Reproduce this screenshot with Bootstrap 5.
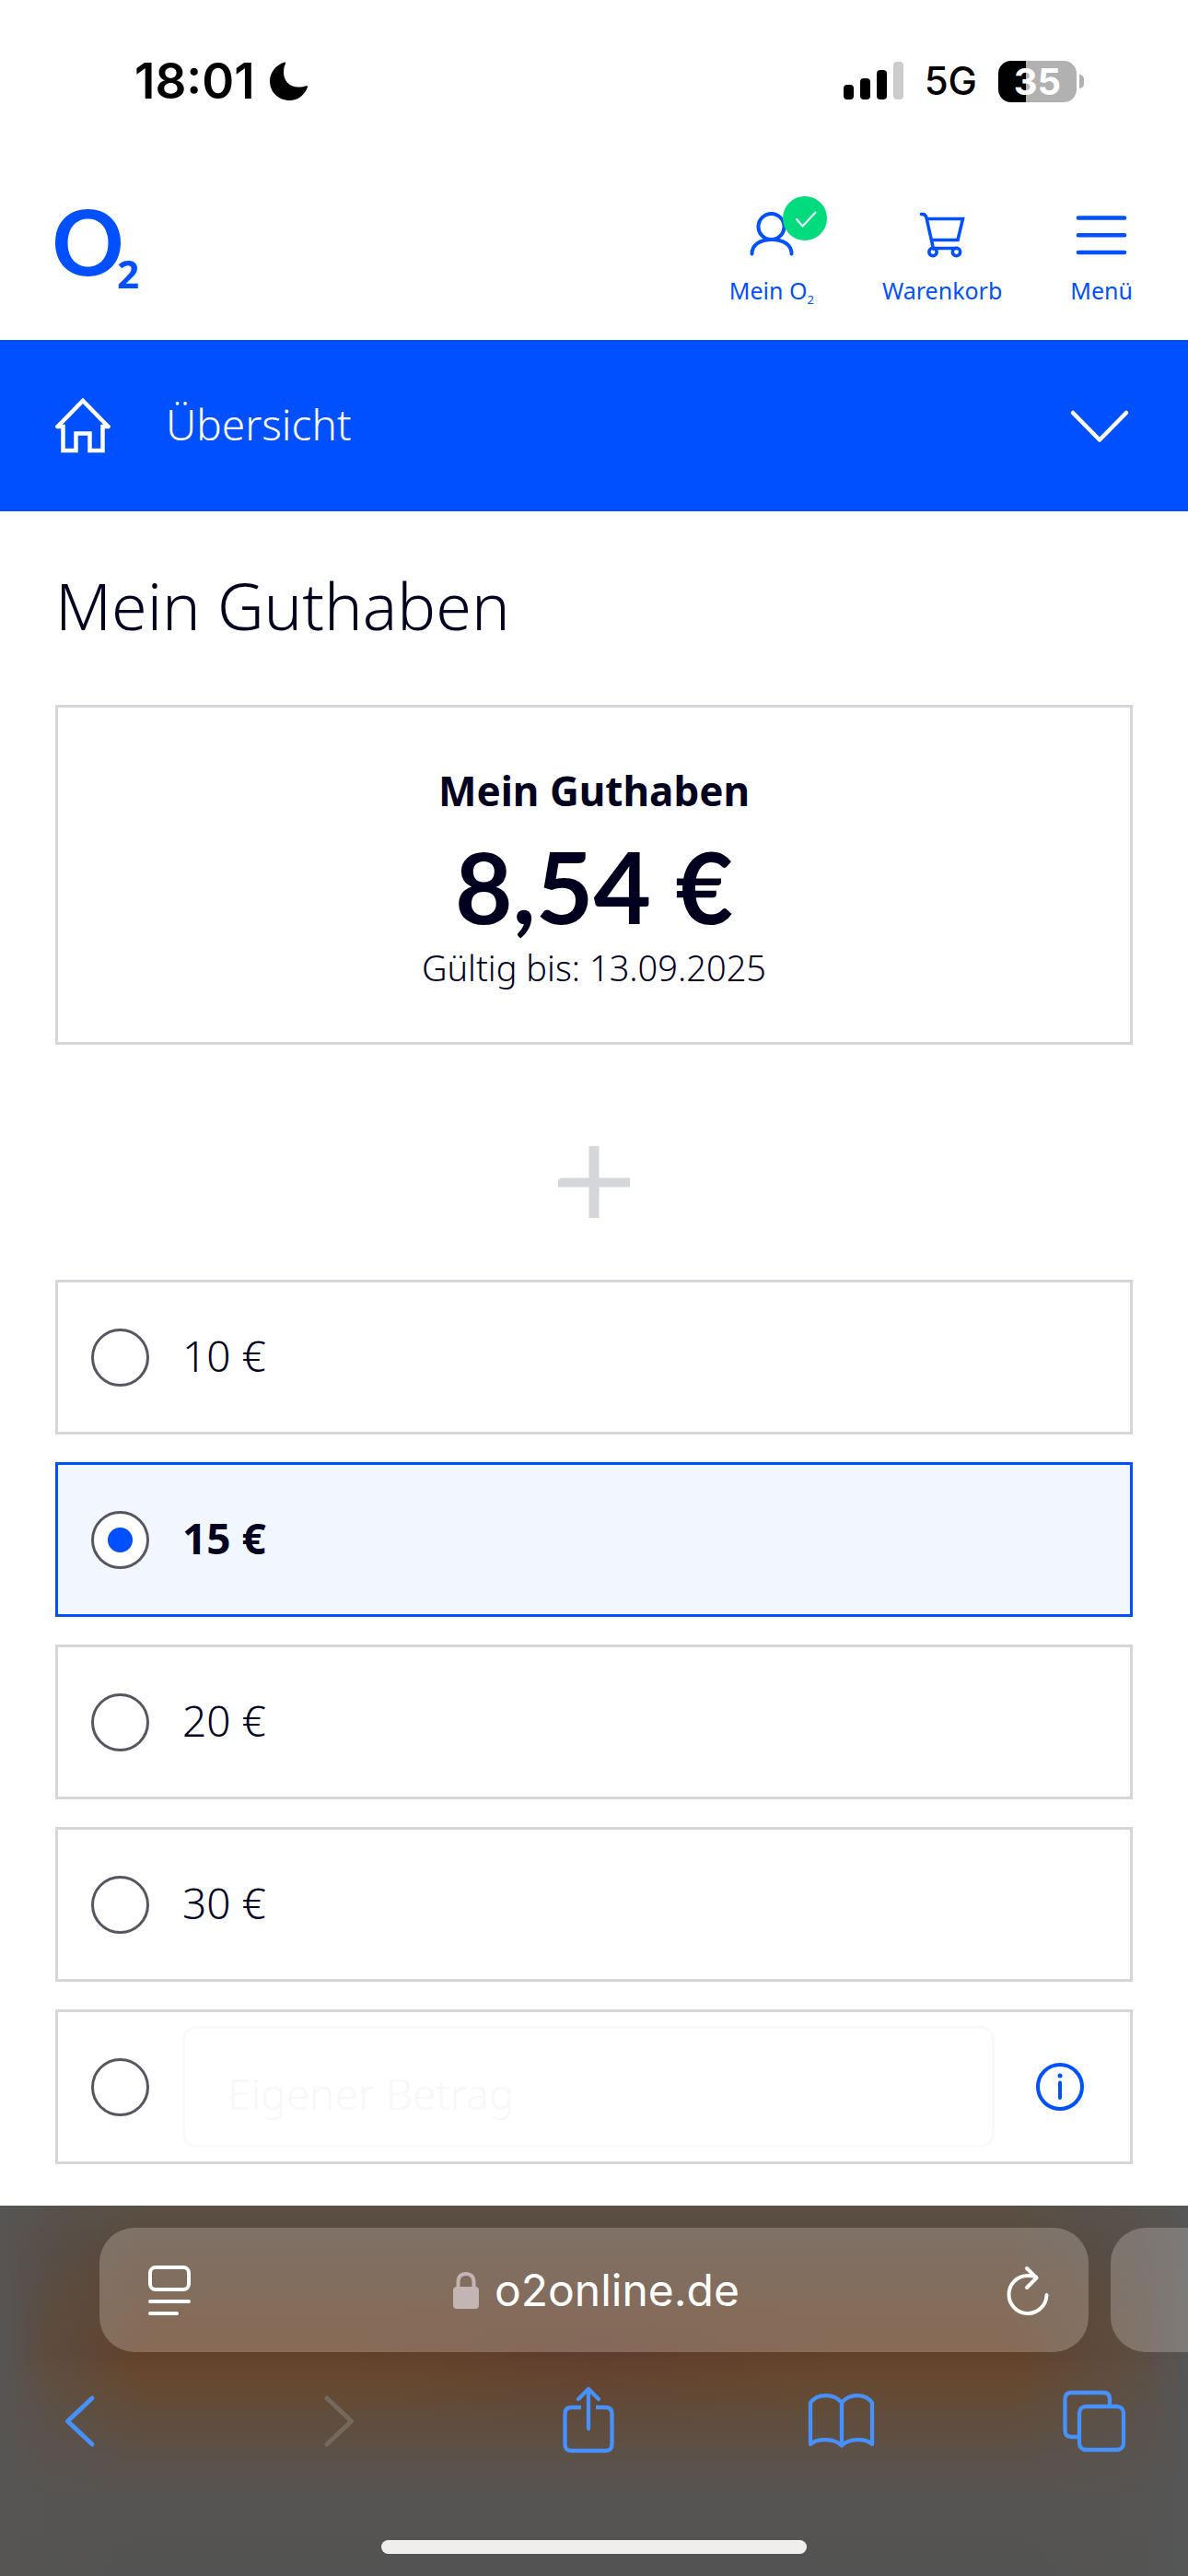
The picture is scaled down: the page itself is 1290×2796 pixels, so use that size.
<!DOCTYPE html>
<html lang="de">
<head>
<meta charset="utf-8">
<meta name="viewport" content="width=device-width, initial-scale=1">
<title>Mein Guthaben – o2online.de</title>
<link href="https://cdn.jsdelivr.net/npm/bootstrap@5.3.0/dist/css/bootstrap.min.css" rel="stylesheet">
<style>
  :root { --o2-blue: #0050ff; --o2-ink: #01001e; --o2-line: #d5d6da; --gutter: 60px; }
  body { font-family: "Noto Sans", "Open Sans", sans-serif; color: var(--o2-ink); background: #fff; }
  svg { display: block; flex: none; overflow: visible; }
  .system-font { font-family: Inter, Roboto, sans-serif; }

  .status-bar { height: 176px; padding: 0 113px 0 146px; color: #000; }
  .status-time { font-size: 53px; line-height: 60px; font-weight: 600; gap: 16px; }
  .status-net { font-size: 42px; line-height: 48px; font-weight: 500; }
  .net-type { padding: 0 23px; }
  .battery-level { width: 85px; height: 45px; border-radius: 14px; font-size: 40px; line-height: 45px; font-weight: 700;
    color: #fff; background: linear-gradient(90deg, #000 35%, #b1b1b1 35%); }
  .battery-tip { width: 5px; height: 15px; border-radius: 0 5px 5px 0; background: #b1b1b1; margin-left: 3px; }

  .site-header { padding: 51px var(--gutter) 36px; }
  .site-nav { gap: 74px; }
  .site-nav a { color: var(--o2-blue); font-size: 25px; line-height: 36px; gap: 14px; }
  .site-nav sub { font-size: 13px; line-height: 0; bottom: -5px; }
  .state-dot { left: 40px; top: -14px; }

  .section-toggle { height: 186px; padding: 0 var(--gutter); background: var(--o2-blue); color: #fff; font-size: 46px; font-weight: 300; gap: 60px; }
  .section-name { padding-bottom: 4px; }

  .content-area { padding: 60px var(--gutter) 45px; }
  .page-title { font-size: 70px; line-height: 84px; font-weight: 300; margin-bottom: 66px; }
  .balance-box { border: 3px solid var(--o2-line); padding: 60px 30px 53px; }
  .balance-label { font-size: 44px; line-height: 60px; font-weight: 700; }
  .balance-value { font-family: Lato, "Noto Sans", sans-serif; font-size: 108px; line-height: 112px; font-weight: 700; margin: 17px 0 5px; }
  .balance-date { font-size: 38px; line-height: 56px; font-weight: 300; }
  .plus-sign { margin: 110px auto 67px; }

  .amount-list { gap: 30px; }
  .amount-option { min-height: 168px; border: 3px solid var(--o2-line); padding: 0 50px 0 36px; gap: 36px; font-size: 46px; line-height: 60px; font-weight: 300; }
  .amount-option label { padding-bottom: 4px; }
  .amount-option:has(> .form-check-input:checked) { border-color: var(--o2-blue); background: #f1f6ff; font-weight: 700; }
  .amount-option .form-check-input { flex: none; width: 63px; height: 63px; margin: 0; border: 3px solid #575562; background: #fff; }
  .amount-option .form-check-input:checked { background: radial-gradient(circle, var(--o2-blue) 13px, #fff 14px); }
  .amount-option .form-control { height: 132px; min-width: 0; border: 3px solid #f9f9fa; border-radius: 15px; padding: 14px 46px 0; font-size: 46px; font-weight: 300; color: var(--o2-ink); }
  .amount-option .form-control::placeholder { color: #f8f8f9; opacity: 1; }
  .info-button { margin-left: 9px; color: var(--o2-blue); }

  .browser-bar { padding: 24px 0; background:
      linear-gradient(90deg, #565554 0, rgba(86,85,84,.5) 4%, rgba(86,85,84,0) 12%, rgba(86,85,84,0) 85%, rgba(86,85,84,.6) 96%, #555657 100%),
      radial-gradient(ellipse 260px 100px at 50% 40%, rgba(90,56,56,.3), rgba(90,56,56,0)),
      linear-gradient(180deg, #5a5045 0, #59473a 12%, #62432b 32%, #62412a 40%, #67482e 46%, #624c38 54%, #5d5046 65%, #565452 78%, #535353 100%);
    color: #4791ff; }
  .tab-row { padding-left: 108px; gap: 24px; }
  .tab-pill { height: 135px; border-radius: 38px; background: rgba(255,246,236,.23); color: #fff; padding: 0 44px 0 53px; }
  .tab-address { font-size: 48px; line-height: 60px; gap: 17px; padding-right: 6px; }
  .tab-next { width: 84px; border-radius: 38px 0 0 38px; padding: 0; flex: none; }
  .tool-row { padding: 37px 67px 94px 51px; }
  .home-indicator { width: 462px; height: 15px; border-radius: 8px; background: #eeeeee; }
</style>
</head>
<body>
<div class="d-flex flex-column min-vh-100">

  <div class="status-bar system-font d-flex justify-content-between align-items-center">
    <div class="status-time d-flex align-items-center">
      <span>18:01</span>
      <svg width="42" height="42" viewBox="0 0 42 42" fill="currentColor" aria-hidden="true"><path d="M16 0.500C17 .3 17.300 1 17 2C15.500 5 15 8 15 11.500C15 21 21.500 27.500 31 27.500C34.500 27.500 37.500 27.200 39.500 26.300C40.800 25.800 41.300 26.600 41 27.500C38 36 30.500 42 21.500 42C9.500 42 0 33 0 21C0 11.500 6.500 3.500 16 .5Z"/></svg>
    </div>
    <div class="status-net d-flex align-items-center">
      <svg width="65" height="42" viewBox="0 0 65 42" aria-hidden="true"><rect y="25" width="11" height="16" rx="4"/><rect x="18" y="18" width="11" height="23" rx="4"/><rect x="36" y="9" width="11" height="32" rx="4"/><rect x="54" width="11" height="41" rx="4" fill="#cbcbcb"/></svg>
      <span class="net-type">5G</span>
      <span class="battery-level text-center">35</span>
      <span class="battery-tip"></span>
    </div>
  </div>

  <header class="site-header d-flex justify-content-between">
    <a href="#" aria-label="o2 Startseite">
      <svg width="92" height="90" viewBox="0 0 92 90" fill="#0050ff"><path fill-rule="evenodd" d="M35.500 0C57 0 71 15 71 36.500S57 73 35.500 73S0 58 0 36.500S14 0 35.500 0ZM35.500 10.500C22 10.500 13.500 21 13.500 36.500S22 62.500 35.500 62.500S57.500 52 57.500 36.500S49 10.500 35.500 10.500Z"/><text x="67" y="86" font-family="Noto Sans, sans-serif" font-size="42" font-weight="700">2</text></svg>
    </a>
    <nav class="site-nav d-flex">
      <a href="#" class="d-flex flex-column align-items-center text-decoration-none">
        <span class="position-relative">
          <svg width="56" height="56" viewBox="0 0 56 56" fill="none" stroke="currentColor" stroke-width="4" stroke-linecap="round"><circle cx="27.500" cy="19" r="14"/><path d="M6.500 48.500C6.500 39 15 33 28 33S49.500 39 49.500 48.500"/></svg>
          <svg class="state-dot position-absolute" width="48" height="48" viewBox="0 0 48 48" fill="none"><circle cx="24" cy="24" r="24" fill="#00dc7d"/><path d="M14.500 24.500L21.500 32.500L36 17" stroke="#fff" stroke-width="2"/></svg>
        </span>
        <span>Mein O<sub>2</sub></span>
      </a>
      <a href="#" class="d-flex flex-column align-items-center text-decoration-none">
        <svg width="56" height="56" viewBox="0 0 56 56" fill="none" stroke="currentColor" stroke-width="3.500"><path d="M5.500 5.500C9 5 10.500 6.500 11 9.500L18.500 43" stroke-linecap="round"/><path d="M11.500 10.500H50.500L45 33.500H17M19 42.500H45"/><circle cx="18" cy="46.500" r="4.200"/><circle cx="43.500" cy="46.500" r="4.200"/></svg>
        <span>Warenkorb</span>
      </a>
      <a href="#" class="d-flex flex-column align-items-center text-decoration-none">
        <svg width="56" height="56" viewBox="0 0 56 56" stroke="currentColor" stroke-width="4.600" stroke-linecap="round"><path d="M3 9.500H53M3 28.300H53M3 47H53"/></svg>
        <span>Menü</span>
      </a>
    </nav>
  </header>

  <button type="button" class="section-toggle btn border-0 rounded-0 d-flex align-items-center w-100 text-start">
    <svg width="60" height="60" viewBox="0 0 60 60" fill="none" stroke="#fff" stroke-width="4.500" stroke-linecap="round" aria-hidden="true"><path d="M2.500 31L30 3L57.500 31"/><path d="M2.500 31H8.500V57H22.500V38.500H37.500V57H51.500V31H57.500"/></svg>
    <span class="section-name flex-grow-1">Übersicht</span>
    <svg width="72" height="36" viewBox="0 0 72 36" fill="none" stroke="#fff" stroke-width="4.500" stroke-linecap="round" stroke-linejoin="round" aria-hidden="true"><path d="M7 4L36 33.500L65 4"/></svg>
  </button>

  <main class="content-area">
    <h1 class="page-title">Mein Guthaben</h1>

    <section class="balance-box text-center">
      <h2 class="balance-label mb-0">Mein Guthaben</h2>
      <p class="balance-value">8,54 €</p>
      <p class="balance-date mb-0">Gültig bis: 13.09.2025</p>
    </section>

    <svg class="plus-sign" width="78" height="78" viewBox="0 0 78 78" fill="#d5d6da" aria-hidden="true"><path d="M33.500 0H44.500V34.500H78V44.500H44.500V78H33.500V44.500H0V39Q0 34.500 5 34.500H33.500Z"/></svg>

    <form class="amount-list d-flex flex-column">
      <div class="amount-option d-flex align-items-center">
        <input class="form-check-input" type="radio" name="amount" id="amount10">
        <label class="flex-grow-1" for="amount10">10 €</label>
      </div>
      <div class="amount-option d-flex align-items-center">
        <input class="form-check-input" type="radio" name="amount" id="amount15" checked>
        <label class="flex-grow-1" for="amount15">15 €</label>
      </div>
      <div class="amount-option d-flex align-items-center">
        <input class="form-check-input" type="radio" name="amount" id="amount20">
        <label class="flex-grow-1" for="amount20">20 €</label>
      </div>
      <div class="amount-option d-flex align-items-center">
        <input class="form-check-input" type="radio" name="amount" id="amount30">
        <label class="flex-grow-1" for="amount30">30 €</label>
      </div>
      <div class="amount-option d-flex align-items-center">
        <input class="form-check-input" type="radio" name="amount" id="amountOwn" aria-label="Eigener Betrag">
        <input class="form-control" type="text" inputmode="decimal" placeholder="Eigener Betrag" aria-label="Eigener Betrag">
        <button type="button" class="info-button btn border-0 p-0" aria-label="Information">
          <svg width="52" height="52" viewBox="0 0 52 52" fill="none" stroke="currentColor" stroke-width="4"><circle cx="26" cy="26" r="24"/><path d="M26 21.500V38" stroke-linecap="round"/><circle cx="26" cy="14" r="2.500" fill="currentColor" stroke="none"/></svg>
        </button>
      </div>
    </form>
  </main>

  <footer class="browser-bar mt-auto">
    <div class="tab-row d-flex">
      <div class="tab-pill system-font flex-grow-1 d-flex align-items-center justify-content-between">
        <button type="button" class="btn border-0 p-0" aria-label="Seiteneinstellungen">
          <svg width="46" height="54" viewBox="0 0 46 54" fill="none" stroke="#fff" stroke-width="4" stroke-linecap="round"><rect x="2" y="2" width="42" height="24" rx="6"/><path d="M2 39H44M2 52H31"/></svg>
        </button>
        <div class="tab-address d-flex align-items-center">
          <svg width="28" height="40" viewBox="0 0 28 40" aria-hidden="true"><rect y="16" width="28" height="24" rx="4" fill="#c2b5b3"/><path d="M5.500 17V11C5.500 5 9 2 14 2S22.500 5 22.500 11V17" fill="none" stroke="#c2b5b3" stroke-width="4"/></svg>
          <span>o2online.de</span>
        </div>
        <button type="button" class="btn border-0 p-0" aria-label="Neu laden">
          <svg width="44" height="54" viewBox="0 0 44 54" fill="none" stroke="#fff" stroke-width="4" stroke-linecap="round" stroke-linejoin="round"><path d="M31 12.500C28 11.300 25.500 11 22 11A20.500 20.500 0 1 0 42.500 32"/><path d="M21 3L31.500 13.500L21 24"/></svg>
        </button>
      </div>
      <div class="tab-pill tab-next"></div>
    </div>
    <div class="tool-row d-flex justify-content-between">
      <button type="button" class="btn border-0 p-0" aria-label="Zurück"><svg width="72" height="73" viewBox="0 0 72 73" fill="none" stroke="#4791ff" stroke-width="5" stroke-linecap="round" stroke-linejoin="round"><path d="M49 13L22.500 38L49 63"/></svg></button>
      <button type="button" class="btn border-0 p-0" aria-label="Vor"><svg width="72" height="73" viewBox="0 0 72 73" fill="none" stroke="#75695f" stroke-width="5" stroke-linecap="round" stroke-linejoin="round"><path d="M29 13L55.500 38L29 63"/></svg></button>
      <button type="button" class="btn border-0 p-0" aria-label="Teilen"><svg width="72" height="73" viewBox="0 0 72 73" fill="none" stroke="#4791ff" stroke-width="4.300" stroke-linecap="round" stroke-linejoin="round"><path d="M38 46V3.500M27 14L38 3L49 14"/><path stroke-linecap="butt" d="M30 23H19.500Q12.500 23 12.500 30V63Q12.500 70 19.500 70H56.500Q63.500 70 63.500 63V30Q63.500 23 56.500 23H46"/></svg></button>
      <button type="button" class="btn border-0 p-0" aria-label="Lesezeichen"><svg width="72" height="73" viewBox="0 0 72 73" fill="none" stroke="#4791ff" stroke-width="4.300" stroke-linecap="round" stroke-linejoin="round"><path d="M38 18C30 7.500 11 7.500 4 18V63C11 56.500 30 56 38 64.500C46 56 64 56.500 71 63V18C64 7.500 46 7.500 38 18ZM38 18V64"/></svg></button>
      <button type="button" class="btn border-0 p-0" aria-label="Tabs"><svg width="72" height="73" viewBox="0 0 72 73" fill="none" stroke="#4791ff" stroke-width="4.300"><rect x="21" y="22" width="48" height="47" rx="7"/><path d="M54 21V14Q54 7 47 7H12.500Q5.500 7 5.500 14V48Q5.500 55 12.500 55H20"/></svg></button>
    </div>
    <div class="home-indicator mx-auto"></div>
  </footer>
</div>
<script src="https://cdn.jsdelivr.net/npm/bootstrap@5.3.0/dist/js/bootstrap.bundle.min.js"></script>
</body>
</html>
